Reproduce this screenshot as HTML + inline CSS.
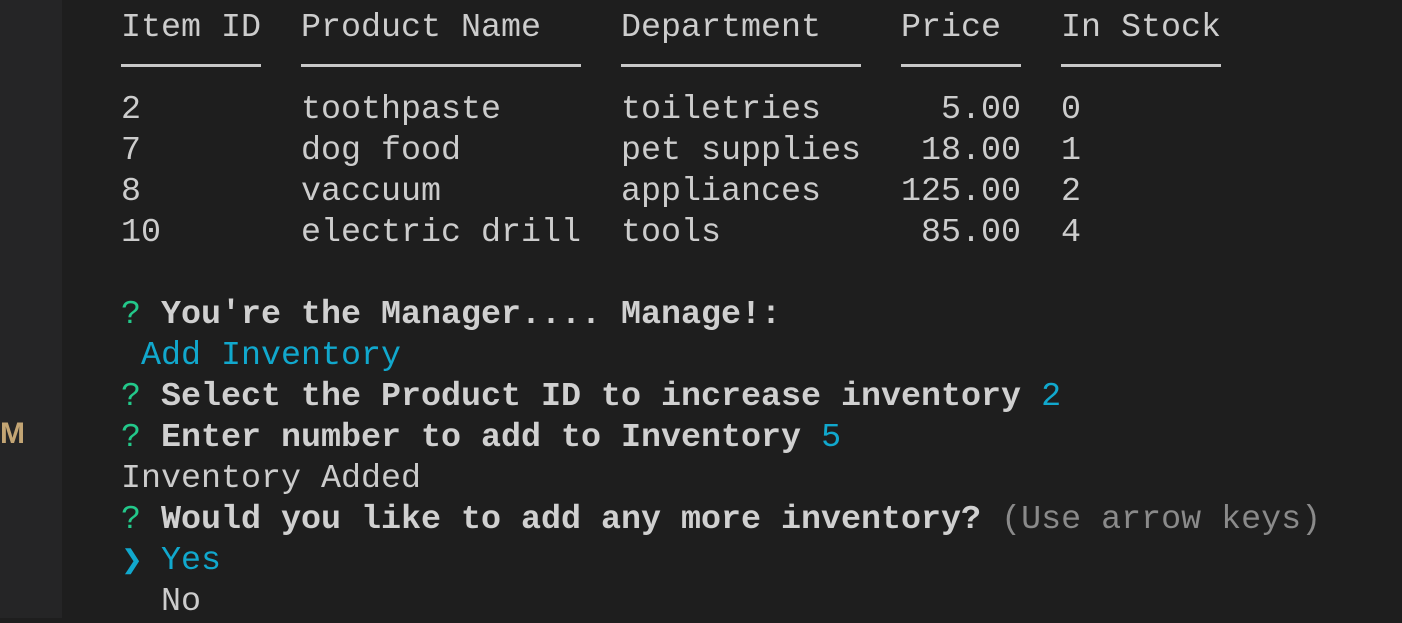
<!DOCTYPE html>
<html><head><meta charset="utf-8"><style>
html,body{margin:0;padding:0;width:1402px;height:618px;overflow:hidden;background:#1e1e1e}
.g{position:absolute;left:0;top:0;width:62px;height:618px;background:#252526}
.m{position:absolute;left:0;top:417px;font:bold 30px "Liberation Sans",sans-serif;color:#c3a574}
pre{position:absolute;left:121px;top:8px;margin:0;font-family:"Liberation Mono",monospace;font-size:33.33px;line-height:41px;color:#cccccc;white-space:pre}
b{font-weight:bold;color:#d0d0d0}.q{color:#23c88a}.c{color:#11a8cd}.d{color:#8a8a8a}
.ar{display:inline-block;width:20px;overflow:hidden;font-size:26px;vertical-align:top}
.l{display:inline-block;height:3px;background:#c8c8c8;vertical-align:middle;margin-top:-6px}
</style></head><body>
<div class="g"></div><div class="m">M</div>
<pre>Item ID  Product Name    Department    Price   In Stock
<span class="l" style="width:140px"></span>  <span class="l" style="width:280px"></span>  <span class="l" style="width:240px"></span>  <span class="l" style="width:120px"></span>  <span class="l" style="width:160px"></span>
2        toothpaste      toiletries      5.00  0
7        dog food        pet supplies   18.00  1
8        vaccuum         appliances    125.00  2
10       electric drill  tools          85.00  4

<span class="q">?</span> <b>You're the Manager.... Manage!:</b>
<span class="c"> Add Inventory</span>
<span class="q">?</span> <b>Select the Product ID to increase inventory</b> <span class="c">2</span>
<span class="q">?</span> <b>Enter number to add to Inventory</b> <span class="c">5</span>
Inventory Added
<span class="q">?</span> <b>Would you like to add any more inventory?</b> <span class="d">(Use arrow keys)</span>
<span class="c"><span class="ar">❯</span> Yes</span>
  No</pre>
</body></html>
